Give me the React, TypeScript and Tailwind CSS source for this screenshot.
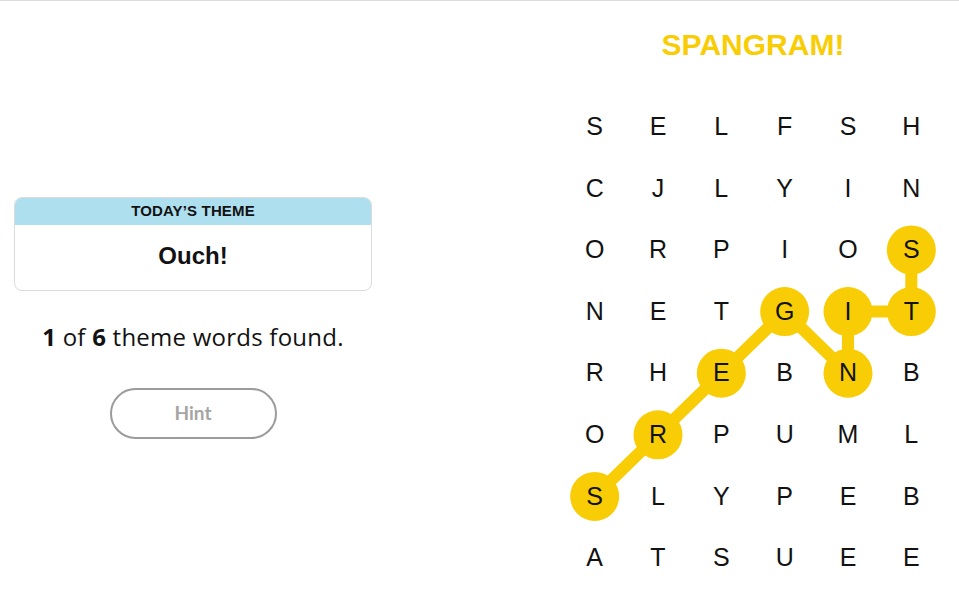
const GRID = [
  "SELFSH",
  "CJLYIN",
  "ORPIOS",
  "NETGIT",
  "RHEBNB",
  "ORPUML",
  "SLYPEB",
  "ATSUEE",
];

// spangram path, [row, col]
const PATH: [number, number][] = [
  [6, 0],
  [5, 1],
  [4, 2],
  [3, 3],
  [4, 4],
  [3, 4],
  [3, 5],
  [2, 5],
];

const CELL_W = 380 / 6;
const CELL_H = 61.6;

function ThemeCard() {
  return (
    <div className="w-[358px] overflow-hidden rounded-lg border border-[#dcdcdc] bg-white">
      <div className="flex h-[27px] items-center justify-center bg-[#aedfee] text-[15px] font-bold uppercase tracking-[0.01em] text-[#121212] [font-family:'Liberation_Sans',sans-serif]">
        Today’s Theme
      </div>
      <div className="flex h-[65px] items-center justify-center pb-[3px] text-[24px] font-bold text-[#121212] [font-family:'Liberation_Sans',sans-serif]">
        Ouch!
      </div>
    </div>
  );
}

function Board() {
  const pts = PATH.map(([r, c]) => `${(c + 0.5) * CELL_W},${(r + 0.5) * CELL_H}`).join(" ");

  return (
    <div className="relative w-[380px]">
      <svg className="absolute inset-0 h-full w-full" aria-hidden>
        <polyline points={pts} fill="none" stroke="#f8cd05" strokeWidth={12} strokeLinejoin="round" />
        {PATH.map(([r, c]) => (
          <circle key={`${r}-${c}`} cx={(c + 0.5) * CELL_W} cy={(r + 0.5) * CELL_H} r={24.5} fill="#f8cd05" />
        ))}
      </svg>
      <div className="relative grid grid-cols-6">
        {GRID.map((row, r) =>
          row.split("").map((ch, c) => (
            <div
              key={`${r}-${c}`}
              className="flex h-[61.6px] items-center justify-center text-[25px] text-[#121212] [font-family:'Liberation_Sans',sans-serif]"
            >
              {ch}
            </div>
          ))
        )}
      </div>
    </div>
  );
}

export default function App() {
  return (
    <div className="h-[605px] w-[959px] overflow-hidden border-t border-[#dcdcdc] bg-white">
      <div className="flex">
        <div className="flex w-[386px] flex-col items-center pt-[196px]">
          <ThemeCard />
          <p className="mt-[28px] text-[24px] tracking-[0.01em] text-[#121212] [font-family:'Open_Sans',sans-serif]">
            <b>1</b> of <b>6</b> theme words found.
          </p>
          <button className="mt-[33px] h-[51px] w-[167px] rounded-full border-2 border-[#9b9b9b] text-[19px] font-bold text-[#a5a5a5] [font-family:Lato,sans-serif]">
            Hint
          </button>
        </div>
        <div className="ml-[177px] flex flex-col items-center">
          <div className="mt-[29px] h-[66px] text-[30px] leading-none font-bold text-[#f8cd05] [font-family:'Liberation_Sans',sans-serif]">
            SPANGRAM!
          </div>
          <Board />
        </div>
      </div>
    </div>
  );
}
